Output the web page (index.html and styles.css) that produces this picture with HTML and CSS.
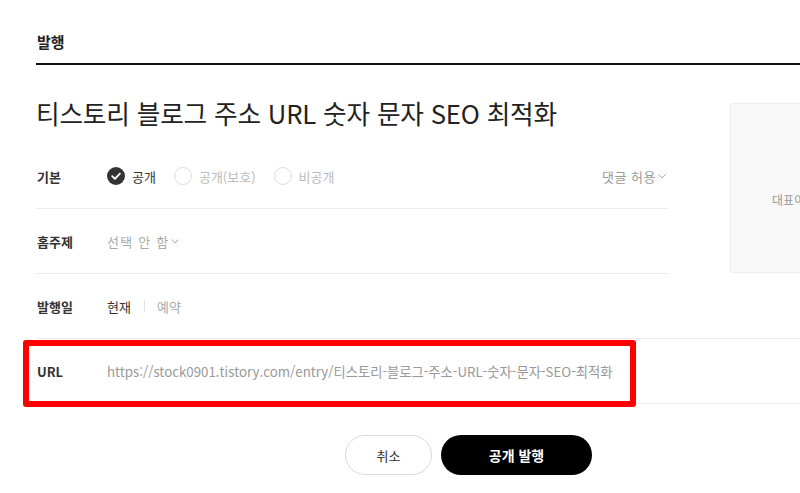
FILE: index.html
```html
<!DOCTYPE html>
<html lang="ko">
<head>
<meta charset="utf-8">
<title>발행</title>
<link rel="stylesheet" href="styles.css">
</head>
<body>
<div class="page">
  <div class="header"><h2 class="header-title">발행</h2></div>
  <div class="top">
    <div class="main">
      <h1 class="title">티스토리 블로그 주소 URL 숫자 문자 SEO 최적화</h1>
      <div class="row">
        <span class="label">기본</span>
        <div class="radios">
          <span class="radio on"><span class="dot"><svg viewBox="0 0 18 18" width="18" height="18"><circle cx="9" cy="9" r="9" fill="#333"/><path d="M5.2 9.2 L7.9 11.8 L12.9 6.6" fill="none" stroke="#fff" stroke-width="1.8" stroke-linecap="round" stroke-linejoin="round"/></svg></span>공개</span>
          <span class="radio"><span class="dot empty"></span>공개(보호)</span>
          <span class="radio"><span class="dot empty"></span>비공개</span>
        </div>
        <span class="comment">댓글 허용<svg class="chev" viewBox="0 0 8 5" width="8" height="5"><path d="M0.5 0.5 L4 4 L7.5 0.5" fill="none" stroke="#aaa" stroke-width="1"/></svg></span>
      </div>
      <div class="row">
        <span class="label">홈주제</span>
        <span class="select">선택 안 함<svg class="chev" viewBox="0 0 8 5" width="8" height="5"><path d="M0.5 0.5 L4 4 L7.5 0.5" fill="none" stroke="#aaa" stroke-width="1"/></svg></span>
      </div>
      <div class="row">
        <span class="label">발행일</span>
        <span class="now">현재</span><span class="sep"></span><span class="reserve">예약</span>
      </div>
    </div>
    <div class="thumb"><span class="thumb-text">대표이미지 추가</span></div>
  </div>
  <div class="row url-row">
    <span class="label">URL</span>
    <span class="url">https://stock0901.tistory.com/entry/티스토리-블로그-주소-URL-숫자-문자-SEO-최적화</span>
  </div>
  <div class="buttons">
    <button class="btn cancel">취소</button>
    <button class="btn publish">공개 발행</button>
  </div>
  <div class="highlight"></div>
</div>
</body>
</html>
```

FILE: styles.css
```css
html, body {
  margin: 0;
  padding: 0;
  background: #fff;
}
body {
  font-family: "Noto Sans CJK KR", "Noto Sans", sans-serif;
  color: #333;
  width: 800px;
  height: 493px;
  overflow: hidden;
}
.page {
  position: relative;
  padding-left: 36px;
  width: 764px;
}
.header {
  height: 63px;
  border-bottom: 2px solid #111;
  width: 800px;
  display: flex;
  align-items: flex-end;
}
.header-title {
  margin: 0 0 11px 1px;
  font-size: 15px;
  font-weight: 700;
  line-height: 20px;
  color: #222;
}
.top {
  display: flex;
}
.main {
  width: 632px;
  flex: none;
}
.title {
  margin: 30px 0 0 0;
  padding-bottom: 13px;
  font-size: 25.7px;
  font-weight: 400;
  line-height: 36px;
  color: #222;
  letter-spacing: -0.2px;
  white-space: nowrap;
}
.row {
  height: 64px;
  border-bottom: 1px solid #ebebeb;
  display: flex;
  align-items: center;
  font-size: 13px;
}
.label {
  width: 70px;
  flex: none;
  padding-left: 1px;
  font-weight: 700;
  color: #333;
  font-size: 13px;
}
.radios {
  display: flex;
  align-items: center;
  gap: 18px;
  flex: 1;
}
.radio {
  display: flex;
  align-items: center;
  gap: 7px;
  color: #bbb;
}
.radio.on {
  color: #333;
}
.dot {
  width: 18px;
  height: 18px;
  display: block;
}
.dot svg {
  display: block;
}
.dot.empty {
  box-sizing: border-box;
  border: 1px solid #ddd;
  border-radius: 50%;
}
.comment {
  color: #999;
  display: flex;
  align-items: center;
  gap: 2px;
  margin-right: 2px;
  letter-spacing: 0.5px;
}
.chev {
  display: block;
  margin-top: 1px;
}
.select {
  color: #aaa;
  display: flex;
  align-items: center;
  gap: 2px;
  letter-spacing: 1.2px;
}
.now {
  color: #333;
}
.sep {
  width: 1px;
  height: 12px;
  background: #e3e3e3;
  margin: 0 12px 0 13px;
}
.reserve {
  color: #aaa;
}
.thumb {
  margin: 38px 0 0 62px;
  width: 120px;
  height: 170px;
  flex: none;
  background: #f8f8f8;
  border: 1px solid #f0f0f0;
  box-sizing: border-box;
  display: flex;
  align-items: center;
  padding-left: 41px;
  overflow: hidden;
}
.thumb-text {
  font-size: 12px;
  color: #999;
  white-space: nowrap;
  margin-top: 22px;
}
.url-row {
  width: 764px;
  border-top: 1px solid #ebebeb;
  margin-top: -1px;
}
.url {
  color: #999;
  font-size: 13.3px;
  white-space: nowrap;
}
.buttons {
  display: flex;
  gap: 9px;
  padding-left: 309px;
  margin-top: 31px;
}
.btn {
  height: 40px;
  border-radius: 20px;
  font-family: "Noto Sans CJK KR", "Noto Sans", sans-serif;
  font-size: 13px;
  cursor: pointer;
  padding: 0;
}
.cancel {
  width: 87px;
  background: #fff;
  border: 1px solid #d9d9d9;
  color: #333;
}
.publish {
  width: 151px;
  background: #000;
  border: none;
  color: #fff;
  font-weight: 700;
  font-size: 14px;
}
.highlight {
  position: absolute;
  left: 23px;
  top: 340px;
  width: 613px;
  height: 67px;
  box-sizing: border-box;
  border: 6px solid #ff0000;
  border-radius: 3px;
  pointer-events: none;
}
```
